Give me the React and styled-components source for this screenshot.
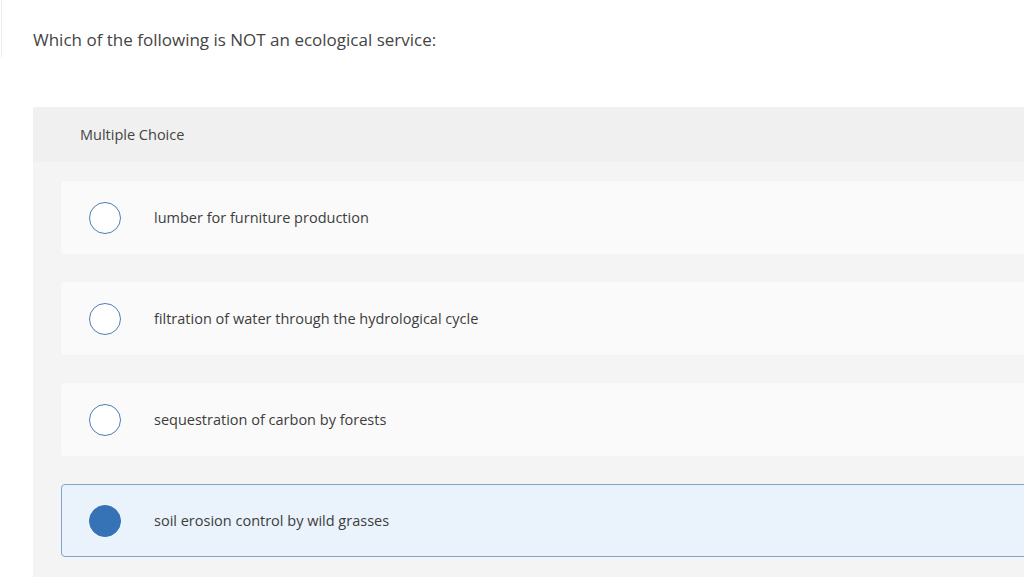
import React from "react";
import styled, { createGlobalStyle } from "styled-components";

const GlobalStyle = createGlobalStyle`
    html, body {
        margin: 0;
        padding: 0;
        background: #ffffff;
        overflow: hidden;
    }
    body {
        font-family: "Open Sans", Lato, Arial, sans-serif;
        color: #333333;
    }
`

const Page = styled.div`
    position: relative;
    width: 1024px;
    height: 577px;
    overflow: hidden;
    padding-left: 33px;
    box-sizing: border-box;
`
const EdgeLine = styled.div`
    position: absolute;
    left: 1px;
    top: 0;
    width: 1px;
    height: 57px;
    background: #ececec;
`
const Question = styled.div`
    height: 107px;
    padding-top: 28px;
    box-sizing: border-box;
    font-size: 17px;
    color: #444444;
`
const Panel = styled.div`
    background: #f4f4f4;
    width: 100%;
    padding-bottom: 40px;
`
const PanelHeader = styled.div`
    display: flex;
    align-items: center;
    height: 55px;
    padding-left: 47px;
    background: #f0f0f0;
    font-size: 14.5px;
    color: #444444;
`
const OptionList = styled.div`
    display: flex;
    flex-direction: column;
    gap: 28px;
    padding: 19px 0 0 28px;
`
const Option = styled.div`
    display: flex;
    align-items: center;
    height: 73px;
    box-sizing: border-box;
    margin-right: -10px;
    border-radius: 4px;
    background: ${props => (props.selected ? "#eaf2fb" : "#fafafa")};
    border: 1px solid ${props => (props.selected ? "#7ba5d8" : "transparent")};
    padding-left: 27px;
`
const Radio = styled.span`
    width: 32px;
    height: 32px;
    box-sizing: border-box;
    border-radius: 50%;
    flex-shrink: 0;
    border: 1.5px solid ${props => (props.selected ? "#3a72b4" : "#4f7db5")};
    background: ${props => (props.selected ? "#3672b6" : "#ffffff")};
`
const Label = styled.span`
    margin-left: 33px;
    font-size: 14.5px;
    color: #3d3d3d;
`

const options = [
    "lumber for furniture production",
    "filtration of water through the hydrological cycle",
    "sequestration of carbon by forests",
    "soil erosion control by wild grasses",
];

const App = () => {
    const selected = 3;
    return (
        <Page>
            <GlobalStyle />
            <EdgeLine />
            <Question>Which of the following is NOT an ecological service:</Question>
            <Panel>
                <PanelHeader>Multiple Choice</PanelHeader>
                <OptionList>
                    {options.map((text, i) => (
                        <Option key={i} selected={i === selected}>
                            <Radio selected={i === selected} />
                            <Label>{text}</Label>
                        </Option>
                    ))}
                </OptionList>
            </Panel>
        </Page>
    );
};

export default App;
